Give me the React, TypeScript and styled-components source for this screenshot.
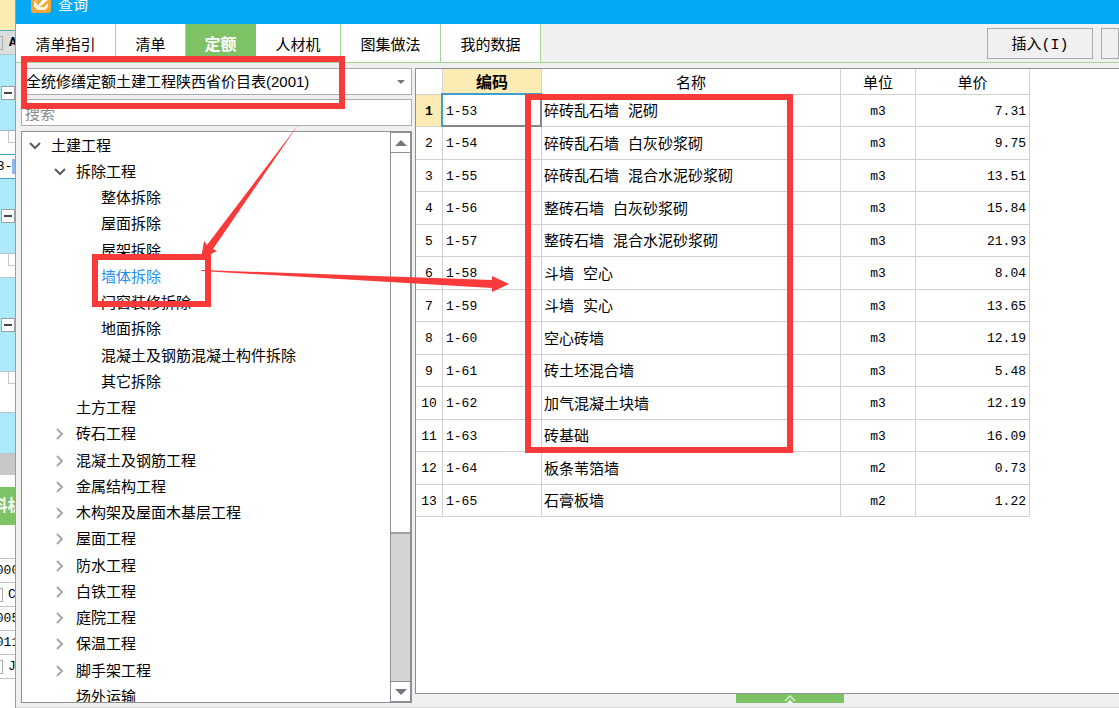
import React, { useState } from "react";
import styled, { createGlobalStyle, css } from "styled-components";

const color = {
  title: "#03a9f4",
  green: "#7dc365",
  greenLine: "#a5d696",
  face: "#f0f0f0",
  frame: "#8c8f96",
  grid: "#d0d0d0",
  cream: "#fdebb4",
  cyan: "#ade8fb",
  mark: "#f93a3a",
  link: "#1e90f0",
};

const sans = `"Liberation Sans", "Noto Sans CJK SC", sans-serif`;
const mono = `"Liberation Mono", "Noto Sans CJK SC", monospace`;

const GlobalStyle = createGlobalStyle`
  * { box-sizing: border-box; }
  html, body, #root { height: 100%; }
  body {
    margin: 0;
    overflow: hidden;
    background: #fff;
    color: #000;
    font: 15px/20px ${sans};
  }
  button, input, select { font: inherit; color: inherit; margin: 0; border-radius: 0; }
`;

const Screen = styled.div`
  position: relative;
  display: flex;
  height: 100vh;
  overflow: hidden;
`;

/* ---------- window behind the dialog ---------- */

const Backdrop = styled.aside`
  flex: none;
  width: 15px;
  display: flex;
  flex-direction: column;
  overflow: hidden;
  font-family: ${mono};
  font-size: 13px;
`;

const Strip = styled.div<{ $h: number; $bg?: string; $line?: string }>`
  flex: none;
  display: flex;
  align-items: center;
  justify-content: center;
  overflow: hidden;
  white-space: nowrap;
  height: ${(p) => p.$h}px;
  background: ${(p) => p.$bg ?? "#fff"};
  border-bottom: 1px solid ${(p) => p.$line ?? "#b9c4c8"};
`;

const HeaderStrip = styled(Strip)`
  justify-content: flex-start;
  gap: 6px;
  font-weight: bold;
`;

const ItemStrip = styled(Strip)`
  justify-content: flex-start;
  gap: 5px;
`;

const HalfBox = styled.span`
  flex: none;
  width: 3px;
  height: 14px;
  border: solid #aaa;
  border-width: 1px 1px 1px 0;
`;

const Branch = styled.span`
  width: 7px;
  height: 12px;
  margin: 0 0 auto auto;
  border: solid #c4c8cc;
  border-width: 0 0 1px 1px;
`;

const Picked = styled.span`
  flex: none;
  align-self: stretch;
  width: 6px;
  margin: 4px 0;
  background: #8fb9ea;
`;

const PanelTab = styled(Strip)`
  color: #fff;
  font: bold 16px/20px ${sans};
`;

const Collapse = styled.button`
  flex: none;
  width: 14px;
  height: 14px;
  padding: 0;
  display: grid;
  place-items: center;
  background: #fff;
  border: 1px solid #9aa0a4;
  &::before {
    content: "";
    width: 8px;
    height: 2px;
    background: #444;
  }
`;

/* ---------- dialog ---------- */

const Dialog = styled.main`
  flex: 1;
  min-width: 0;
  display: flex;
  flex-direction: column;
  background: ${color.face};
  border-left: 1px solid #9a9da1;
`;

const TitleBar = styled.header`
  flex: none;
  height: 24px;
  display: flex;
  align-items: flex-end;
  gap: 7px;
  overflow: hidden;
  padding: 0 15px 11px;
  background: ${color.title};
  color: #fff;
  line-height: 16px;
  svg { flex: none; }
`;

const Toolbar = styled.div`
  flex: none;
  height: 39px;
  display: flex;
  justify-content: space-between;
  overflow: hidden;
  border-bottom: 1px solid ${color.greenLine};
`;

const Tabs = styled.nav`
  display: flex;
`;

const Tab = styled.button<{ $w: number; $active: boolean }>`
  width: ${(p) => p.$w}px;
  padding: 4px 0 0;
  border: 0;
  border-right: 1px solid ${color.greenLine};
  background: #fff;
  ${(p) =>
    p.$active &&
    css`
      background: ${color.green};
      border-color: ${color.green};
      color: #fff;
      font-size: 16px;
      font-weight: bold;
    `}
`;

const Actions = styled.div`
  display: flex;
  gap: 8px;
  padding-top: 4px;
`;

const ActionButton = styled.button<{ $w: number }>`
  width: ${(p) => p.$w}px;
  height: 31px;
  padding: 4px 0 0;
  border: 1px solid #a9a9a9;
  background: ${color.face};
  font-family: ${mono};
`;

const Body = styled.div`
  flex: 1;
  min-height: 0;
  display: flex;
  gap: 3px;
  padding: 5px 0 4px 5px;
  border-bottom: 1px solid #d8d8d8;
`;

const Sidebar = styled.section`
  flex: none;
  width: 391px;
  display: flex;
  flex-direction: column;
  gap: 4px;
`;

const Picker = styled.label`
  flex: none;
  height: 27px;
  display: flex;
  align-items: center;
  padding-right: 6px;
  background: #fff;
  border: 1px solid #a8abb0;
  select {
    flex: 1;
    min-width: 0;
    height: 25px;
    padding: 0 0 0 4px;
    appearance: none;
    border: 0;
    background: transparent;
    outline: 0;
  }
`;

const Search = styled.input`
  flex: none;
  height: 27px;
  padding: 2px 3px 0;
  border: 1px solid #a8abb0;
  background: #fff;
  outline: 0;
  &::placeholder { color: #8a8a8a; opacity: 1; }
`;

const TreeBox = styled.div`
  flex: 1;
  min-height: 0;
  display: flex;
  margin-top: 1px;
  overflow: hidden;
  background: #fff;
  border: 1px solid ${color.frame};
`;

const TreeList = styled.ul`
  flex: 1;
  min-width: 0;
  margin: 0;
  padding: 0;
  list-style: none;
`;

const TreeRow = styled.li<{ $level: number; $active: boolean }>`
  display: flex;
  align-items: center;
  gap: 10px;
  height: 26px;
  padding-left: ${(p) => 7 + p.$level * 25}px;
  white-space: nowrap;
  color: ${(p) => (p.$active ? color.link : "#000")};
  &:nth-child(4n + 1) { height: 27px; }
`;

const Twist = styled.span`
  flex: none;
  width: 12px;
  display: grid;
  place-items: center;
`;

const ScrollBar = styled.div`
  flex: none;
  width: 21px;
  display: flex;
  flex-direction: column;
  background: #d4d4d4;
  border: solid ${color.frame};
  border-width: 0 1px;
`;

const ScrollButton = styled.button`
  flex: none;
  height: 21px;
  padding: 0;
  display: grid;
  place-items: center;
  border: solid ${color.frame};
  border-width: 1px 0;
  background: #fff;
`;

const Thumb = styled.div`
  flex: 18;
  background: #fff;
  border-bottom: 2px solid #a0a2a6;
`;

const Groove = styled.div`
  flex: 7;
`;

const Content = styled.section`
  flex: 1;
  min-width: 0;
  display: flex;
  flex-direction: column;
`;

const GridBox = styled.div`
  flex: 1;
  min-height: 0;
  overflow: hidden;
  background: #fff;
  border: solid ${color.frame};
  border-width: 1px 0 1px 1px;
`;

const Drawer = styled.button`
  flex: none;
  align-self: center;
  width: 108px;
  height: 9px;
  margin-left: 46px;
  padding: 0;
  display: flex;
  justify-content: center;
  border: 0;
  background: ${color.green};
`;

const Table = styled.table`
  width: 614px;
  table-layout: fixed;
  border-collapse: separate;
  border-spacing: 0;
`;

const Head = styled.th<{ $active?: boolean }>`
  height: 26px;
  padding: 2px 0 0;
  font-weight: ${(p) => (p.$active ? "bold" : "normal")};
  font-size: ${(p) => (p.$active ? 16 : 15)}px;
  background: ${(p) => (p.$active ? color.cream : "#fff")};
  border: solid ${color.grid};
  border-width: 0 1px 1px 0;
`;

const Line = styled.tr`
  height: 32px;
  &:nth-child(even) { height: 33px; }
`;

const Cell = styled.td<{ $align?: string; $number?: boolean; $focus?: boolean }>`
  padding: ${(p) => (p.$number ? "2px 3px 0" : "5px 3px 0 2px")};
  text-align: ${(p) => p.$align ?? "left"};
  white-space: nowrap;
  border: solid ${color.grid};
  border-width: 0 1px 1px 0;
  font-family: ${mono};
  font-size: ${(p) => (p.$number ? 13 : 15)}px;
  ${(p) =>
    p.$focus &&
    css`
      border-color: #84868a;
      box-shadow: -2px 0 #3a9fd0, 0 -2px #3a9fd0, -2px -2px #3a9fd0, inset -1px -1px #84868a;
    `}
`;

const Index = styled.th<{ $active: boolean }>`
  padding: 2px 0 0;
  font: ${(p) => (p.$active ? "bold" : "normal")} 13px/20px ${mono};
  background: ${(p) => (p.$active ? color.cream : "#fff")};
  border: solid ${color.grid};
  border-width: 0 1px 1px 0;
`;

const Marks = styled.svg`
  position: absolute;
  top: 0;
  left: 0;
  pointer-events: none;
`;

/* ---------- data ---------- */

const tabs = [
  { name: "清单指引", w: 100 },
  { name: "清单", w: 70 },
  { name: "定额", w: 70 },
  { name: "人材机", w: 85 },
  { name: "图集做法", w: 100 },
  { name: "我的数据", w: 100 },
];

type Node = { name: string; level: number; state?: "open" | "closed" };

const tree: Node[] = [
  { name: "土建工程", level: 0, state: "open" },
  { name: "拆除工程", level: 1, state: "open" },
  { name: "整体拆除", level: 2 },
  { name: "屋面拆除", level: 2 },
  { name: "屋架拆除", level: 2 },
  { name: "墙体拆除", level: 2 },
  { name: "门窗装修拆除", level: 2 },
  { name: "地面拆除", level: 2 },
  { name: "混凝土及钢筋混凝土构件拆除", level: 2 },
  { name: "其它拆除", level: 2 },
  { name: "土方工程", level: 1 },
  { name: "砖石工程", level: 1, state: "closed" },
  { name: "混凝土及钢筋工程", level: 1, state: "closed" },
  { name: "金属结构工程", level: 1, state: "closed" },
  { name: "木构架及屋面木基层工程", level: 1, state: "closed" },
  { name: "屋面工程", level: 1, state: "closed" },
  { name: "防水工程", level: 1, state: "closed" },
  { name: "白铁工程", level: 1, state: "closed" },
  { name: "庭院工程", level: 1, state: "closed" },
  { name: "保温工程", level: 1, state: "closed" },
  { name: "脚手架工程", level: 1, state: "closed" },
  { name: "场外运输", level: 1 },
];

const rows: [string, string, string, string][] = [
  ["1-53", "碎砖乱石墙 泥砌", "m3", "7.31"],
  ["1-54", "碎砖乱石墙 白灰砂浆砌", "m3", "9.75"],
  ["1-55", "碎砖乱石墙 混合水泥砂浆砌", "m3", "13.51"],
  ["1-56", "整砖石墙 白灰砂浆砌", "m3", "15.84"],
  ["1-57", "整砖石墙 混合水泥砂浆砌", "m3", "21.93"],
  ["1-58", "斗墙 空心", "m3", "8.04"],
  ["1-59", "斗墙 实心", "m3", "13.65"],
  ["1-60", "空心砖墙", "m3", "12.19"],
  ["1-61", "砖土坯混合墙", "m3", "5.48"],
  ["1-62", "加气混凝土块墙", "m3", "12.19"],
  ["1-63", "砖基础", "m3", "16.09"],
  ["1-64", "板条苇箔墙", "m2", "0.73"],
  ["1-65", "石膏板墙", "m2", "1.22"],
];

/* ---------- drawings ---------- */

const AppIcon = () => (
  <svg width="20" height="20" viewBox="0 0 20 20" aria-hidden="true">
    <rect width="20" height="20" rx="3" fill="#f3a735" />
    <path d="M3 8v6l4 3h7l3-3v-4l-4 4H8l-2-3z" fill="#fff3dc" />
    <path d="M8 11l7-8 3 3-8 7-3 1z" fill="#fff" />
    <path d="M3 4h7L5 9z" fill="#fbd598" />
  </svg>
);

const Chevron = ({ open }: { open: boolean }) =>
  open ? (
    <svg width="12" height="8" viewBox="0 0 12 8" aria-hidden="true">
      <path d="M1 1l5 5 5-5" fill="none" stroke="#5c5c5c" strokeWidth="2" />
    </svg>
  ) : (
    <svg width="8" height="12" viewBox="0 0 8 12" aria-hidden="true">
      <path d="M1 1l5 5-5 5" fill="none" stroke="#a8a8a8" strokeWidth="2" />
    </svg>
  );

const Triangle = ({ up, size }: { up?: boolean; size: number }) => (
  <svg width={size} height={size / 2} viewBox="0 0 12 6" aria-hidden="true">
    <path d={up ? "M0 6L6 0l6 6z" : "M0 0l6 6 6-6z"} fill="#74767e" />
  </svg>
);

const Backing = () => (
  <Backdrop>
    <Strip $h={31} $bg={color.cream} $line="#5aa6b8" />
    <HeaderStrip $h={24} $bg="#dadedd"><HalfBox />A</HeaderStrip>
    <Strip $h={76} $bg={color.cyan} $line="#9fb4bc"><Collapse aria-label="折叠" /></Strip>
    <Strip $h={24} $line="#3f9fc4"><Branch /></Strip>
    <Strip $h={24} $line="#3f9fc4">3-<Picked /></Strip>
    <Strip $h={75} $bg={color.cyan}><Collapse aria-label="折叠" /></Strip>
    <Strip $h={24}><Branch /></Strip>
    <Strip $h={94} $bg={color.cyan}><Collapse aria-label="折叠" /></Strip>
    <Strip $h={41}><Branch /></Strip>
    <Strip $h={41} $bg={color.cyan} />
    <Strip $h={21} $bg="#c8c8c8" $line="#c8c8c8" />
    <Strip $h={12} $line="#fff" />
    <PanelTab $h={38} $bg={color.green} $line={color.green}>料机</PanelTab>
    <Strip $h={34} />
    <Strip $h={24}>000</Strip>
    <ItemStrip $h={24}><HalfBox />C</ItemStrip>
    <Strip $h={24}>005</Strip>
    <Strip $h={24}>011</Strip>
    <ItemStrip $h={24}><HalfBox />J</ItemStrip>
  </Backdrop>
);

const Annotations = () => (
  <Marks width="1119" height="708" viewBox="0 0 1119 708" aria-hidden="true">
    <g fill="none" stroke={color.mark} strokeWidth="6">
      <rect x="24" y="59" width="318" height="47" />
      <rect x="95" y="257" width="113" height="47" />
      <rect x="528" y="97" width="262" height="353" />
    </g>
    <g fill={color.mark}>
      <path d="M298 125L207 245l-3-4-3 18 16-8-4-2z" />
      <path d="M201 270L492 280v-4l17 8-17 8v-4L201 271z" />
    </g>
  </Marks>
);

export default function App() {
  const [tab, setTab] = useState("定额");
  const [node, setNode] = useState("墙体拆除");

  return (
    <Screen>
      <GlobalStyle />
      <Backing />
      <Dialog>
        <TitleBar><AppIcon />查询</TitleBar>
        <Toolbar>
          <Tabs>
            {tabs.map((t) => (
              <Tab key={t.name} $w={t.w} $active={t.name === tab} onClick={() => setTab(t.name)}>
                {t.name}
              </Tab>
            ))}
          </Tabs>
          <Actions>
            <ActionButton $w={106}>插入(I)</ActionButton>
            <ActionButton $w={18} aria-label="替换" />
          </Actions>
        </Toolbar>
        <Body>
          <Sidebar>
            <Picker>
              <select aria-label="定额库">
                <option>全统修缮定额土建工程陕西省价目表(2001)</option>
              </select>
              <Triangle size={8} />
            </Picker>
            <Search type="text" aria-label="搜索" placeholder="搜索" />
            <TreeBox>
              <TreeList>
                {tree.map((n) => (
                  <TreeRow
                    key={n.name}
                    $level={n.level}
                    $active={n.name === node}
                    onClick={() => setNode(n.name)}
                  >
                    <Twist>{n.state && <Chevron open={n.state === "open"} />}</Twist>
                    {n.name}
                  </TreeRow>
                ))}
              </TreeList>
              <ScrollBar>
                <ScrollButton aria-label="向上"><Triangle up size={12} /></ScrollButton>
                <Thumb />
                <Groove />
                <ScrollButton aria-label="向下"><Triangle size={12} /></ScrollButton>
              </ScrollBar>
            </TreeBox>
          </Sidebar>
          <Content>
            <GridBox>
              <Table>
                <colgroup>
                  <col width="27" />
                  <col width="99" />
                  <col width="299" />
                  <col width="75" />
                  <col width="114" />
                </colgroup>
                <thead>
                  <tr>
                    <Head />
                    <Head $active>编码</Head>
                    <Head>名称</Head>
                    <Head>单位</Head>
                    <Head>单价</Head>
                  </tr>
                </thead>
                <tbody>
                  {rows.map(([code, name, unit, price], i) => (
                    <Line key={code}>
                      <Index scope="row" $active={i === 0}>{i + 1}</Index>
                      <Cell $number $focus={i === 0}>{code}</Cell>
                      <Cell>{name}</Cell>
                      <Cell $number $align="center">{unit}</Cell>
                      <Cell $number $align="right">{price}</Cell>
                    </Line>
                  ))}
                </tbody>
              </Table>
            </GridBox>
            <Drawer aria-label="展开">
              <svg width="12" height="9" viewBox="0 0 12 9" aria-hidden="true">
                <path d="M1 7l5-5 5 5" fill="none" stroke="#d8f0cf" strokeWidth="1.5" />
                <path d="M3 9l3-3 3 3z" fill="#fff" />
              </svg>
            </Drawer>
          </Content>
        </Body>
      </Dialog>
      <Annotations />
    </Screen>
  );
}
